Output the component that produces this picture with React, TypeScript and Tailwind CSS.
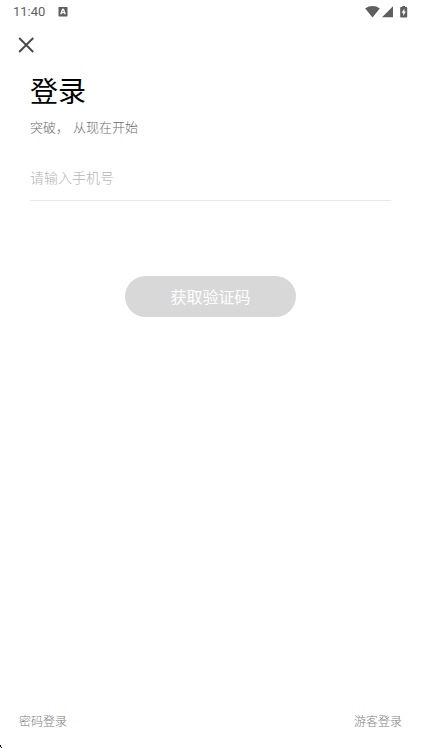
import { useState } from "react";

function StatusBar() {
  return (
    <div className="flex h-6 items-center justify-between px-[13px] text-[#5f5f5f]">
      <div className="flex items-center gap-3">
        <span className="w-[33px] font-[Roboto,sans-serif] text-[13px] leading-4 font-normal">11:40</span>
        <svg className="size-[10px]" viewBox="0 0 10 10" aria-hidden="true">
          <rect x="0.5" y="0" width="9" height="9.4" rx="0.6" fill="#5f5f5f" />
          <path d="M2.8 7.2 4.5 2.5h1L7.2 7.2M3.6 5.7h2.8" fill="none" stroke="#fff" strokeWidth="1.3" />
        </svg>
      </div>
      <div className="flex items-center">
        <svg className="h-3 w-[15px]" viewBox="0 0 15 12" fill="currentColor" aria-hidden="true">
          <path d="M7.5 11.4 0.2 2.6C2.3.9 4.8.1 7.5.1s5.2.8 7.3 2.5Z" />
        </svg>
        <svg className="ml-[2px] h-3 w-[11px]" viewBox="0 0 11 12" fill="currentColor" aria-hidden="true">
          <path d="M0 11.2 11 .2v11Z" />
        </svg>
        <svg className="ml-[7px] h-3 w-2" viewBox="0 0 8 12" aria-hidden="true">
          <path
            d="M2.2 0h2.8v1h1.5c.4 0 .7.3.7.7v9.1c0 .4-.3.7-.7.7H.9a.7.7 0 0 1-.7-.7V1.700c0-.4.3-.7.7-.7h1.300Z"
            fill="#5f5f5f"
          />
          <path d="M4.4 2.4 1.6 6.8h1.6V10l2.700-4.500H4.400Z" fill="#fff" />
        </svg>
      </div>
    </div>
  );
}

export default function App() {
  const [phone, setPhone] = useState("");

  return (
    <div
      lang="zh-CN"
      className="relative flex min-h-screen flex-col bg-white font-['Noto_Sans_CJK_SC',sans-serif] font-light"
    >
      <StatusBar />
      <header className="flex h-[42px] items-center px-4">
        <button type="button" aria-label="关闭" className="flex size-5 items-center justify-center">
          <svg className="size-4" viewBox="0 0 16 16" fill="none" stroke="#4a4646" strokeWidth="1.9" aria-hidden="true">
            <path d="M1.2 1l14 14M15.2 1L1.2 15" />
          </svg>
        </button>
      </header>
      <main className="flex flex-col px-[30px] pt-1">
        <h1 className="text-[28px] leading-10 font-normal text-black">登录</h1>
        <p className="mt-[7px] flex gap-1 text-[13px] leading-5 text-[#6b6b6b]">
          <span>突破，</span>
          <span>从现在开始</span>
        </p>
        <input
          type="tel"
          aria-label="手机号"
          placeholder="请输入手机号"
          value={phone}
          onChange={(e) => setPhone(e.target.value)}
          className="mt-[17px] h-[47px] w-full border-b border-[#e9e9e9] pb-px text-sm text-[#333] outline-none placeholder:text-[#b4b4b4]"
        />
        <button
          type="button"
          className="mt-[75px] h-[41px] w-[171px] self-center rounded-full bg-[#d8d8d8] pb-[2px] text-base font-normal text-white"
        >
          获取验证码
        </button>
      </main>
      <footer className="mt-auto flex justify-between px-[19px] pb-[17px] text-xs leading-5 text-[#7c7c7c]">
        <button type="button">密码登录</button>
        <button type="button">游客登录</button>
      </footer>
      <svg className="absolute bottom-0 left-0 h-[3px] w-[2px]" viewBox="0 0 2 3" aria-hidden="true">
        <path d="M0 0h1v2H0zM1 2h1v1H1z" />
      </svg>
    </div>
  );
}
